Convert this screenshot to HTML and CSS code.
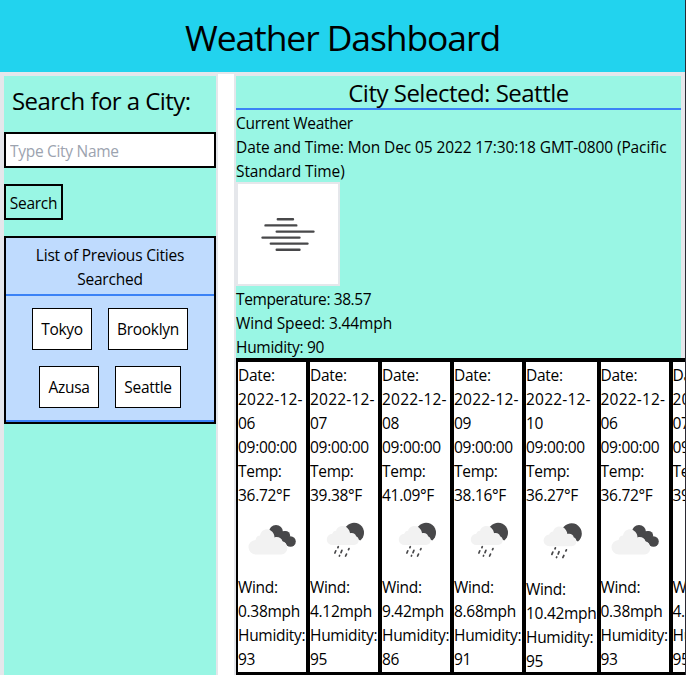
FILE: index.html
```
<!DOCTYPE html>
<html lang="en">
<head>
<meta charset="utf-8">
<title>Weather Dashboard</title>
<link rel="stylesheet" href="styles.css">
</head>
<body>
<svg class="defs" width="0" height="0" aria-hidden="true">
  <symbol id="mist" viewBox="0 0 100 100">
    <g stroke="#48484a" stroke-width="2.4" stroke-linecap="round">
      <path d="M39.8 35.300H55M27.500 41.400H58.300M38.700 47.600H75.500M24.500 53.600H61.500M32.800 59.600H69.500M38.700 65.700H61.500"/>
    </g>
  </symbol>
  <symbol id="clouds" viewBox="0 0 68 68">
    <g fill="#48484a"><circle cx="38" cy="26" r="7"/><circle cx="47.5" cy="29.500" r="4.6"/><circle cx="52.5" cy="35.500" r="5.3"/><path d="M36 27L47 25L52 39L45 36Z"/></g>
    <path fill="#f2f2f2" d="M18 48.500a7.2 7.2 0 0 1-.5-14.5c.5-3.3 2.400-4.500 4.500-4.600C23.300 22.500 31 21.300 34.500 26.100c1.600 1.900 1.900 3.500 2 5.300 3.500-1.100 7.500.6 8 4.100 1.500.2 3.500 1.600 4 3.200 2.500 4.800-1 9.800-5 9.800Z"/>
  </symbol>
  <symbol id="rain" viewBox="0 0 68 68">
    <g transform="translate(1 1.500)">
    <path fill="#48484a" d="M34.200 20.500a10 10 0 1 1 15 12.600L42 29Z"/>
    <path fill="#f2f2f2" d="M21.500 37.500a5.600 5.600 0 0 1-.2-11.200c.6-1.900 1.800-2.800 3.800-3 1-5.300 9.300-7 12.500-1.200.8 1.200 1.200 2.100 1.300 3.600 3-.9 5.900.5 6.200 3.100 3.800 1 3.900 8.700-2.100 8.700Z"/>
    <g stroke="#48484a" stroke-width="1.700" stroke-linecap="round"><path d="M27.300 39.200l-.4.900M24.800 43.300l-.9 2.200M30.900 42.900l-.9 2.200M38 41.100l-.5 1.100M28.600 48l-.2.500M35.500 46.600l-.9 1.900"/></g>
    </g>
  </symbol>
</svg>
<header class="banner"><h1>Weather Dashboard</h1></header>
<main class="layout">
  <aside class="sidebar">
    <h2>Search for a City:</h2>
    <input class="field" type="text" placeholder="Type City Name" aria-label="City">
    <button class="search">Search</button>
    <section class="history">
      <h3>List of Previous Cities<br>Searched</h3>
      <div class="cities">
        <button class="tokyo">Tokyo</button><button class="brooklyn">Brooklyn</button>
        <button class="azusa">Azusa</button><button class="seattle">Seattle</button>
      </div>
    </section>
  </aside>
  <section class="results">
    <h2>City Selected: Seattle</h2>
    <div class="current">
      <p>Current Weather</p>
      <p class="stamp">Date and Time: Mon Dec 05 2022 17:30:18 GMT-0800 (Pacific<br>Standard Time)</p>
      <svg class="now"><use href="#mist"/></svg>
      <p class="temperature">Temperature: 38.57</p>
      <p class="stamp">Wind Speed: 3.44mph</p>
      <p>Humidity: 90</p>
    </div>
    <div class="forecast">
      <article><p>Date:<br><span class="day">2022-12-</span><br>06<br>09:00:00</p><p>Temp:<br>36.72°F</p><svg viewBox="0 0 68 68"><use href="#clouds"/></svg><p>Wind:<br>0.38mph</p><p>Humidity:<br>93</p></article>
      <article><p>Date:<br><span class="day">2022-12-</span><br>07<br>09:00:00</p><p>Temp:<br>39.38°F</p><svg viewBox="0 0 68 68"><use href="#rain"/></svg><p>Wind:<br>4.12mph</p><p>Humidity:<br>95</p></article>
      <article><p>Date:<br><span class="day">2022-12-</span><br>08<br>09:00:00</p><p>Temp:<br>41.09°F</p><svg viewBox="0 0 68 68"><use href="#rain"/></svg><p>Wind:<br>9.42mph</p><p>Humidity:<br>86</p></article>
      <article><p>Date:<br><span class="day">2022-12-</span><br>09<br>09:00:00</p><p>Temp:<br>38.16°F</p><svg viewBox="0 0 68 68"><use href="#rain"/></svg><p>Wind:<br>8.68mph</p><p>Humidity:<br>91</p></article>
      <article class="wide"><p>Date:<br><span class="day">2022-12-</span><br>10<br>09:00:00</p><p>Temp:<br>36.27°F</p><svg viewBox="0 0 68 68"><use href="#rain"/></svg><p>Wind:<br>10.42mph</p><p>Humidity:<br>95</p></article>
      <article><p>Date:<br><span class="day">2022-12-</span><br>06<br>09:00:00</p><p>Temp:<br>36.72°F</p><svg viewBox="0 0 68 68"><use href="#clouds"/></svg><p>Wind:<br>0.38mph</p><p>Humidity:<br>93</p></article>
      <article><p>Date:<br><span class="day">2022-12-</span><br>07<br>09:00:00</p><p>Temp:<br>39.38°F</p><svg viewBox="0 0 68 68"><use href="#rain"/></svg><p>Wind:<br>4.12mph</p><p>Humidity:<br>95</p></article>
    </div>
  </section>
</main>
</body>
</html>
```
FILE: styles.css
```
* { box-sizing: border-box; margin: 0; padding: 0; }
html { overflow: hidden; }
body {
  height: 675px;
  overflow: hidden;
  border-right: 1px solid #2b2a33;
  background: #fff;
  color: #000;
  font: 400 15.5px/24px "Open Sans", "Noto Sans", sans-serif;
  letter-spacing: -0.3px;
}
h1, h2, h3 { font-weight: 400; }
p { padding-top: 1px; margin-bottom: -1px; }
button, input { font: inherit; letter-spacing: inherit; color: inherit; }
.defs { display: block; }
.banner { height: 72px; padding-top: 17px; background: #22d3ee; text-align: center; }
.banner h1 { font-size: 35.5px; line-height: 40px; letter-spacing: -1.1px; }
.layout { display: flex; gap: 16px; height: 620px; border: 2px solid #e5e7eb; }
.sidebar { flex: none; width: 216px; border: 2px solid #e5e7eb; background: #99f6e4; }
.sidebar h2 { margin: 9px 8px 15px; font-size: 24px; line-height: 32px; letter-spacing: -0.55px; white-space: nowrap; }
.field { display: block; width: 212px; height: 36px; padding: 5px 4px 3px; border: 2px solid #000; background: #fff; }
.field::placeholder { color: #9ca3af; opacity: 1; }
.search { display: block; width: 59px; height: 36px; margin: 16px 0; padding-top: 1px; border: 2px solid #000; background: transparent; }
.history { height: 188px; border: 2px solid #000; background: #bfdbfe; text-align: center; }
.history h3 { padding: 5px 4px 3px; border-bottom: 2px solid #3b82f6; font-size: inherit; letter-spacing: -0.2px; }
.cities { display: flex; flex-wrap: wrap; justify-content: center; gap: 16px; padding: 12px 20px; border-bottom: 2px solid #3b82f6; }
.cities button { height: 42px; border: 1px solid #000; background: #fff; }
.tokyo, .azusa { width: 60px; }
.brooklyn { width: 80px; }
.seattle { width: 66px; }
.results { flex: 1; min-width: 0; border: 2px solid #e5e7eb; background: #99f6e4; }
.results h2 { height: 34px; padding-top: 1px; border-bottom: 2px solid #3b82f6; font-size: 24px; line-height: 32px; letter-spacing: -0.5px; text-align: center; }
.current { white-space: nowrap; }
.stamp { letter-spacing: -0.11px; }
.temperature { letter-spacing: -0.4px; }
.now { display: block; width: 104px; height: 104px; border: 2px solid #e5e7eb; background: #fff; }
.forecast { display: flex; width: 507px; border-top: 2px solid #000; border-bottom: 2px solid #000; background: #fff; }
.forecast article { flex: none; width: 72px; border: 2px solid #000; white-space: nowrap; }
.day { letter-spacing: 0.2px; }
.forecast .wide { width: 74.500px; }
.forecast svg { display: block; width: 100%; height: 68px; }
.forecast .wide svg { height: 70px; }
```
